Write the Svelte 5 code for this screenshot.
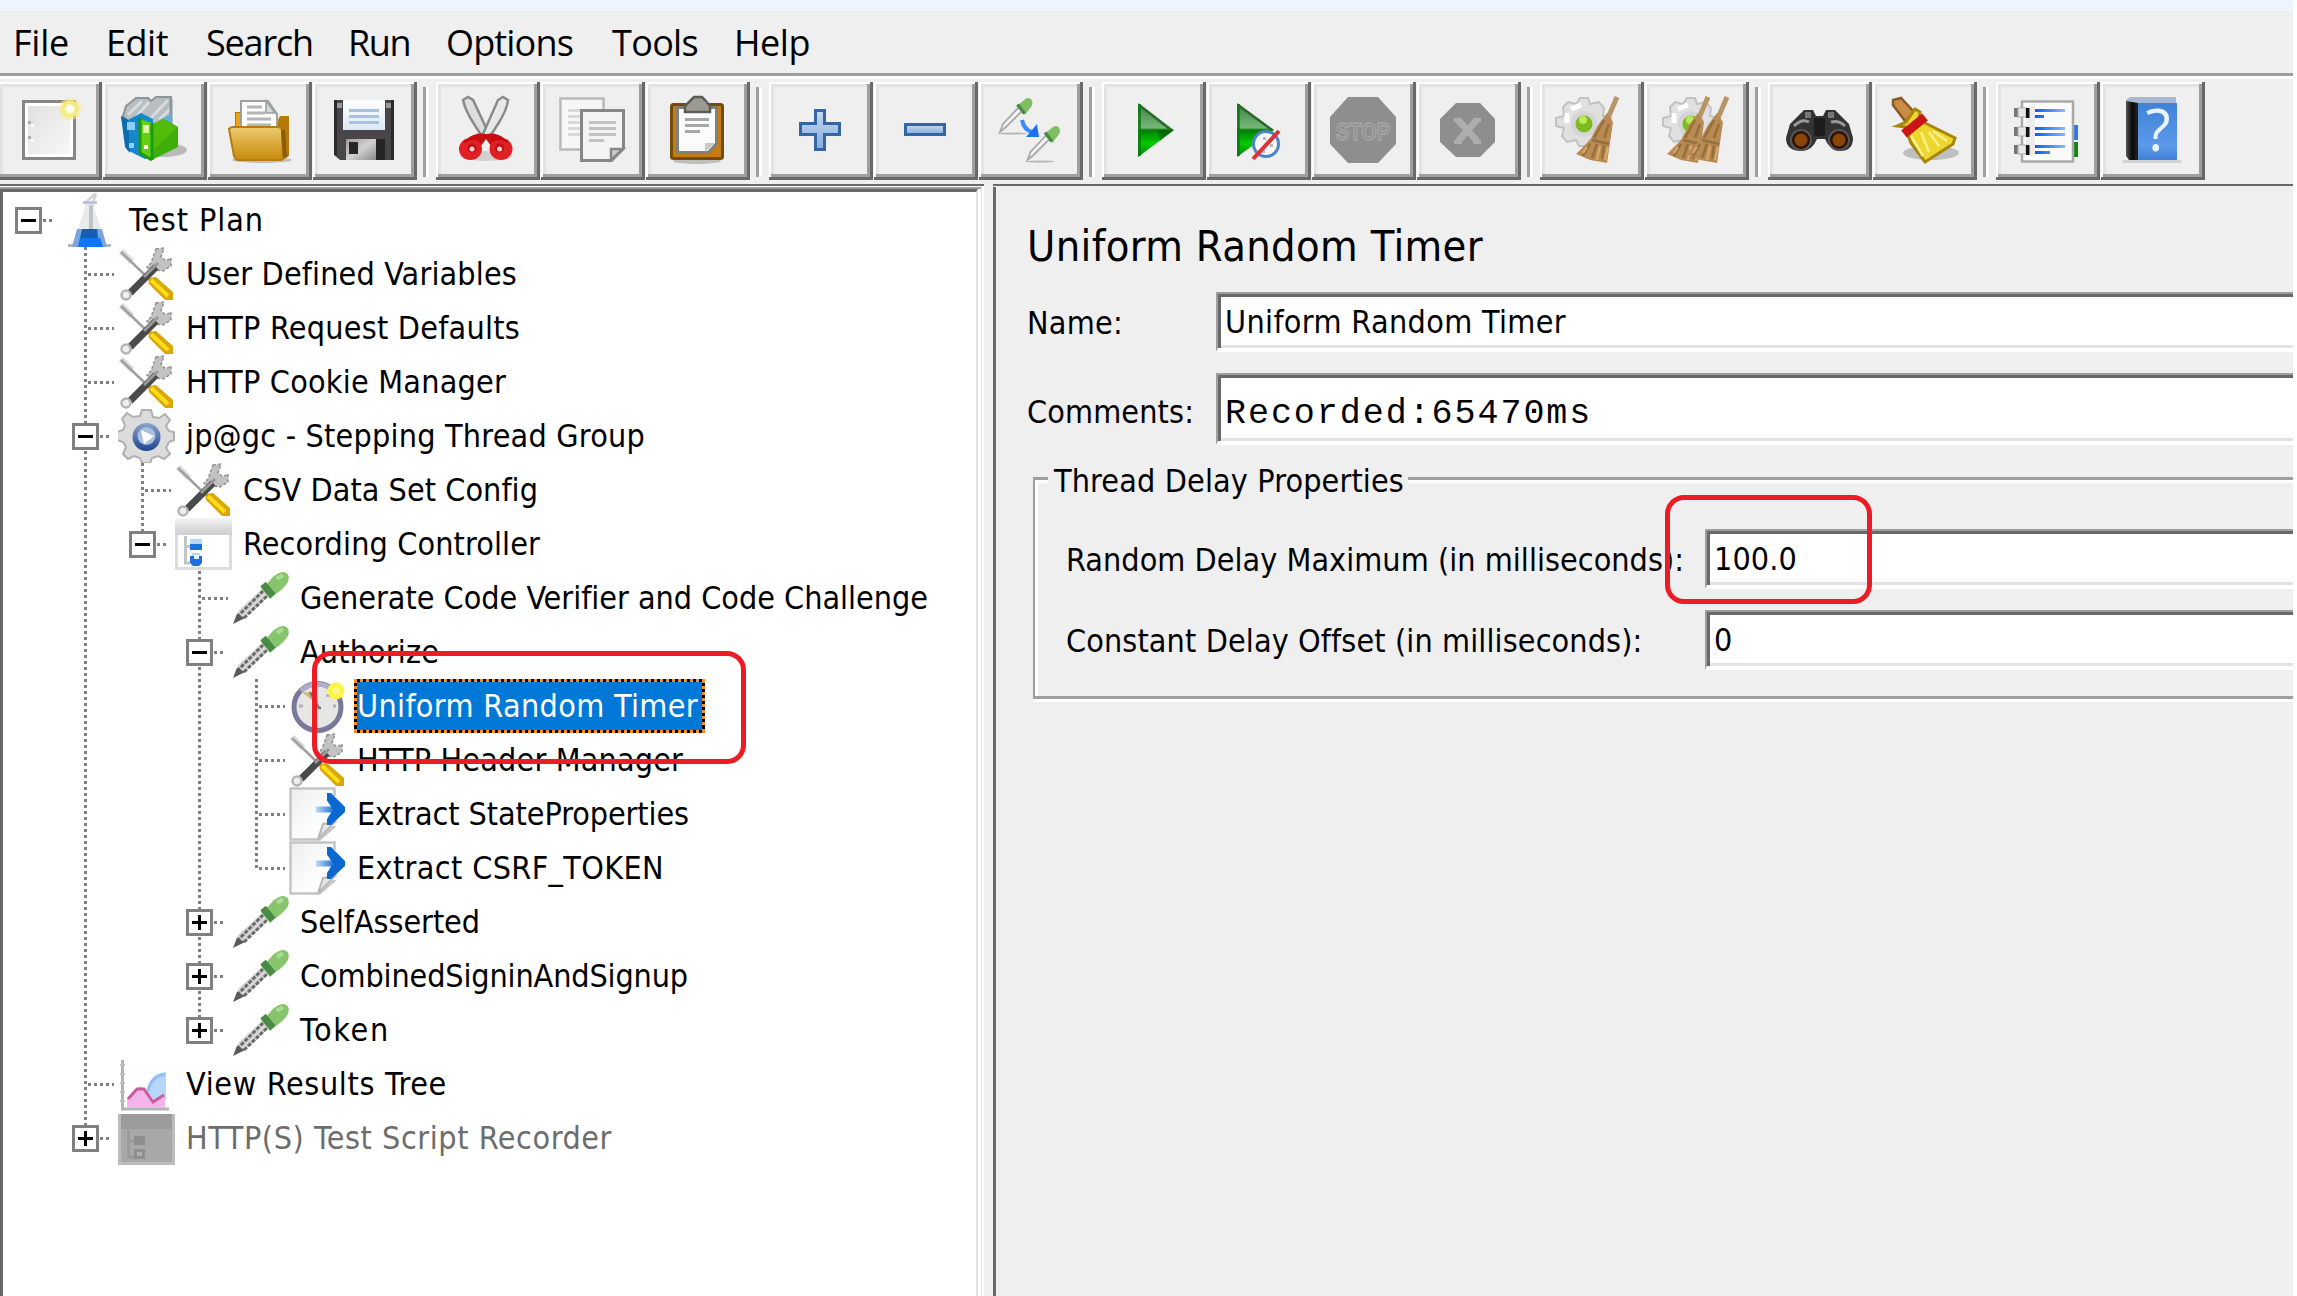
<script>
  const menus = [
    { label: 'File', width: 93 },
    { label: 'Edit', width: 100 },
    { label: 'Search', width: 142 },
    { label: 'Run', width: 98 },
    { label: 'Options', width: 166 },
    { label: 'Tools', width: 122 },
    { label: 'Help', width: 100 },
  ];
  const menuText = [53, 59, 104, 59, 124, 83, 73];

  const toolGroups = [
    ['new', 'templates', 'open', 'save'],
    ['cut', 'copy', 'paste'],
    ['plus', 'minus', 'toggle'],
    ['start', 'startNoTimers', 'stop', 'shutdown'],
    ['clear', 'clearAll'],
    ['search', 'searchReset'],
    ['functions', 'help'],
  ];

  // guides: depths of ancestors whose connector line continues past the row
  const rows = [
    { d: 0, icon: 'flask', text: 'Test Plan', w: 132, box: '-', guides: [], root: true },
    { d: 1, icon: 'tools', text: 'User Defined Variables', w: 328, guides: [] },
    { d: 1, icon: 'tools', text: 'HTTP Request Defaults', w: 331, guides: [] },
    { d: 1, icon: 'tools', text: 'HTTP Cookie Manager', w: 317, guides: [] },
    { d: 1, icon: 'gear', text: 'jp@gc - Stepping Thread Group', w: 456, box: '-', guides: [] },
    { d: 2, icon: 'tools', text: 'CSV Data Set Config', w: 292, guides: [1] },
    { d: 2, icon: 'controller', text: 'Recording Controller', w: 294, box: '-', guides: [1], last: true },
    { d: 3, icon: 'dropper', text: 'Generate Code Verifier and Code Challenge', w: 625, guides: [1] },
    { d: 3, icon: 'dropper', text: 'Authorize', w: 136, box: '-', guides: [1] },
    { d: 4, icon: 'timer', text: 'Uniform Random Timer', w: 338, guides: [1, 3], selected: true },
    { d: 4, icon: 'tools', text: 'HTTP Header Manager', w: 323, guides: [1, 3] },
    { d: 4, icon: 'extract', text: 'Extract StateProperties', w: 329, guides: [1, 3] },
    { d: 4, icon: 'extract', text: 'Extract CSRF_TOKEN', w: 304, guides: [1, 3], last: true },
    { d: 3, icon: 'dropper', text: 'SelfAsserted', w: 177, box: '+', guides: [1] },
    { d: 3, icon: 'dropper', text: 'CombinedSigninAndSignup', w: 385, box: '+', guides: [1] },
    { d: 3, icon: 'dropper', text: 'Token', w: 87, box: '+', guides: [1], last: true },
    { d: 1, icon: 'chart', text: 'View Results Tree', w: 258, guides: [] },
    { d: 1, icon: 'disabled', text: 'HTTP(S) Test Script Recorder', w: 423, box: '+', guides: [], last: true, disabled: true },
  ];

  // Spreads a label's letters so that the text takes the given width
  function fit(node, width) {
    const natural = node.getBoundingClientRect().width;
    const n = node.textContent.length;
    node.style.letterSpacing = `${(width + 3 - natural) / n}px`;
  }
</script>

{#snippet toolIcon(name)}
  <svg class="tool-icon" viewBox="0 0 104 98">
    {#if name === 'new'}
      <rect x="25.5" y="19.5" width="51" height="57" fill="url(#pageG)" stroke="#868684" stroke-width="3" />
      <rect x="28.5" y="22.5" width="45" height="51" fill="none" stroke="#fff" stroke-width="3" />
      <path d="M30 39h3v3h-3zM30 54h3v3h-3z" fill="#aaa" /><path d="M33 42h3v3h-3zM33 57h3v3h-3z" fill="#fff" />
      <circle cx="72" cy="27" r="11" fill="#f7ec8a" opacity=".6" /><circle cx="72" cy="27" r="6.500" fill="#fffef0" stroke="#f6ea80" stroke-width="4" />
    {:else if name === 'templates'}
      <ellipse cx="60" cy="68" rx="24" ry="7" fill="#000" opacity=".22" />
      <path d="M20 34l3-10 10-8h12l3 3 5-4h15v45H44z" fill="#b8bec1" stroke="#8b9498" stroke-width="2" />
      <path d="M25 33l14-14M32 36l14-16M47 37l18-19M56 38l11-11" stroke="#d9dcdd" stroke-width="3" />
      <path d="M68 17v40" stroke="#8b979c" stroke-width="3" />
      <path d="M56 38l12-6v14h-12z" fill="#5fb0e0" />
      <path d="M18 34l7 4 13-7 12 6v38l-8 2-18-9z" fill="#1686cf" /><path d="M18 34l7 4 2 33-5-6z" fill="#0a6cb0" />
      <path d="M24 40h8v8h-8zM26 61h5v5h-5z" fill="#8ed0f5" />
      <path d="M37 37l12 4v37l-12-7z" fill="#62cf12" /><path d="M49 42l12-5 14 8v20L49 78z" fill="#3fae06" />
      <path d="M49 42l12-5 14 8-26 24z" fill="#58c00c" opacity=".7" />
      <path d="M49 41v37M37 36v35l12 7" fill="none" stroke="#1a9a10" stroke-width="3" />
      <path d="M40 43h6v8h-6z" fill="#dff7a0" /><path d="M41 63h4v4h-4z" fill="#fff" />
    {:else if name === 'open'}
      <ellipse cx="54" cy="78" rx="30" ry="3" fill="#000" opacity=".2" />
      <path d="M27 46V30h8v16zM66 46l6-12h9v40l-6 4z" fill="#b5790a" /><path d="M28 46V31h6v15z" fill="#e8a510" />
      <path d="M33 48V19h27l9 13v16z" fill="#fdfdfd" stroke="#9aa0a4" stroke-width="2" /><path d="M58 19v12h9z" fill="#d5dadd" stroke="#9aa0a4" stroke-width="1.5" />
      <path d="M39 25h15M39 31h18M39 37h24M39 43h24" stroke="#b5b5b5" stroke-width="3" />
      <path d="M21 47q1-2 4-2h44q4 0 5 3l1 27q0 3-3 3H31q-4 0-5-4z" fill="url(#foldG)" stroke="#b57d10" stroke-width="2" />
      <path d="M75 48l2 27" stroke="#8a5c08" stroke-width="4" />
    {:else if name === 'save'}
      <path d="M21 18h60v60H27l-6-5z" fill="#484648" /><path d="M21 18h3v55h-3zM78 18h3v60h-3z" fill="#2a2a2a" />
      <path d="M24 21h5v5h-5zM73 21h5v5h-5z" fill="#999" />
      <rect x="30" y="18" width="42" height="30" fill="url(#labelG)" />
      <path d="M36 28.500h30M36 34.500h30M36 40.500h30" stroke="#a9c1dc" stroke-width="3" />
      <rect x="33" y="57" width="30" height="21" fill="url(#shutG)" /><rect x="63" y="57" width="9" height="21" fill="#242424" /><rect x="36" y="60" width="9" height="12" fill="#262626" />
    {:else if name === 'cut'}
      <ellipse cx="50" cy="74" rx="26" ry="5" fill="#000" opacity=".13" />
      <path d="M27 18l5-3 5 3 16 34-6 4-9-14q-9-14-11-24z" fill="#dedede" stroke="#8a8a86" stroke-width="2.500" />
      <path d="M72 18l-5-3-5 3-15 34 6 4 9-14q9-14 10-24z" fill="#e8e8e8" stroke="#8a8a86" stroke-width="2.500" />
      <path d="M32 56q8-6 18-4 10-2 18 4v8H55l-5-7-5 7H32z" fill="#c80f12" />
      <ellipse cx="34.500" cy="67" rx="11.500" ry="11" fill="#e02024" /><ellipse cx="65" cy="67" rx="11.500" ry="11" fill="#e02024" />
      <path d="M28 60q8-6 17-1M72 60q-8-6-17-1" fill="none" stroke="#c40c10" stroke-width="2.500" />
      <circle cx="36" cy="66" r="4.500" fill="#c01014" /><circle cx="63.500" cy="66" r="4.500" fill="#c01014" /><circle cx="36" cy="67" r="2.500" fill="#f3d0d0" /><circle cx="63.500" cy="67" r="2.500" fill="#f3d0d0" />
    {:else if name === 'copy'}
      <rect x="19.500" y="16.500" width="43" height="51" fill="#f6f6f6" stroke="#b9b9b9" stroke-width="2.500" />
      <path d="M27 28.500h13M27 34.500h13M27 40.500h13M27 46.500h13M27 52.500h13" stroke="#d4d4d4" stroke-width="2.500" />
      <path d="M40.500 28.500h42v38l-12 12h-30z" fill="#f3f3f3" stroke="#868684" stroke-width="3" />
      <path d="M70 78V67h12z" fill="#ccc" stroke="#868684" stroke-width="2.500" />
      <path d="M48 40.500h27M48 46.500h27M48 52.500h27M48 58.500h15" stroke="#c2c2c2" stroke-width="3" />
    {:else if name === 'paste'}
      <ellipse cx="51" cy="79" rx="24" ry="3" fill="#000" opacity=".2" />
      <rect x="25.500" y="22.500" width="51" height="54" rx="2" fill="#c17d11" stroke="#724c0a" stroke-width="3" />
      <path d="M31.500 25.500h39v36l-8 9h-31z" fill="#fbfbfb" stroke="#7f7f7c" stroke-width="3" />
      <path d="M59 70V61h10z" fill="#c8c8c5" />
      <path d="M39 37.500h24M39 43.500h24M39 49.500h15" stroke="#a7a7a7" stroke-width="3" />
      <path d="M45 18l3-3h8l3 3 5 6v6H39v-6z" fill="#9b9b92" stroke="#5c5c58" stroke-width="2.500" />
    {:else if name === 'plus'}
      <path d="M46.500 28.500h9v13h15v11h-15v15h-9v-15h-15v-11h15z" fill="url(#blueG)" stroke="#3465a4" stroke-width="3" />
    {:else if name === 'minus'}
      <rect x="31.500" y="42.500" width="39" height="10" fill="url(#blueG)" stroke="#3465a4" stroke-width="3" />
    {:else if name === 'toggle'}
      {#each [[0, 0], [27.500, 28]] as [dx, dy]}
        <g transform="translate({dx} {dy})">
          <ellipse cx="34" cy="51.500" rx="14" ry="1" fill="#b5b5b5" />
          <path d="M21 50l3-8L40 25l4 3-17 17z" fill="#f5f5f5" stroke="#a8a8a8" stroke-width="1.800" />
          <path d="M39 23l5-4q4-5 8-2 3 4 0 8l-4 5-2 3z" fill="#7fbf62" /><path d="M38.500 22.500l7 9" stroke="#4a8a46" stroke-width="3.500" />
        </g>
      {/each}
      <path d="M43 38q2 10 10 12" fill="none" stroke="#3b8bff" stroke-width="4" /><path d="M58 42l2 13-13 0z" fill="#1a72f0" />
    {:else if name === 'start'}
      <path d="M36 21l36 27-36 27z" fill="url(#playG)" /><path d="M37 23l32 25" stroke="#2c6a2c" stroke-width="2.500" /><path d="M37.500 22v52" stroke="#0b7a12" stroke-width="2.500" /><path d="M56 48h16L58 59z" fill="#004b00" opacity=".45" />
    {:else if name === 'startNoTimers'}
      <path d="M30 21l37 27-37 27z" fill="url(#playG)" /><path d="M31 23l34 25" stroke="#2c6a2c" stroke-width="2.500" /><path d="M31.500 22v52" stroke="#0b7a12" stroke-width="2.500" />
      <circle cx="59" cy="62" r="12.500" fill="#f4f6f8" stroke="#4d86c6" stroke-width="3" />
      <path d="M56 55h3v3h-3zM63 62h3v3h-3zM55 68h3v3h-3z" fill="#bbb" /><path d="M46 77l26-28" stroke="#dd3338" stroke-width="4" />
    {:else if name === 'stop'}
      <path d="M36 15h30l18 20v27L66 81H36L18 62V35z" fill="#8e8e8e" />
      <text class="stop" x="51" y="58" text-anchor="middle" textLength="54" lengthAdjust="spacingAndGlyphs">STOP</text>
    {:else if name === 'shutdown'}
      <path d="M39 21h24l15 16v23L63 75H39L23 60V37z" fill="#8e8e8e" />
      <path d="M41 38l19 21M60 38L41 59" stroke="#adadad" stroke-width="7" /><path d="M37 38h8M56 38h8M37 60h8M56 60h8" stroke="#adadad" stroke-width="4" />
    {:else if name === 'clear' || name === 'clearAll'}
      <g transform={name === 'clearAll' ? 'translate(2 0)' : ''}>
        <path d="M40 16h8l2 6 9-2 5 6-1 8 8 2v9l-8 2v8l-7 5-6-2-4 6h-7l-3-6-9 2-5-6 2-8-8-2v-8l8-2-1-9 5-5 8 2z" fill="#e0e0e0" stroke="#c2c2c2" stroke-width="2" />
        <path d="M31 27l10-4M27 31v10" stroke="#fff" stroke-width="5" /><circle cx="44" cy="42" r="13" fill="#d5d5d5" /><circle cx="44" cy="42" r="8.500" fill="#7dbb21" /><circle cx="43" cy="38" r="4" fill="#b9ea57" />
      </g>
      {#each name === 'clearAll' ? [-14, 5] : [0] as dx}
        <g transform="translate({dx} 0)">
          <path d="M77 15L68 36" stroke="#b99565" stroke-width="5" />
          <path d="M67 31l6 9-2 14-4 27-17-3-14-6 14-14 8-15z" fill="#b98a52" />
          <path d="M64 38l-10 18M69 42l-5 14M52 58l17 4M50 62l-7 12M57 62l-5 14M64 63l-2 14" stroke="#94703f" stroke-width="2.500" /><path d="M47 65l-4 6M60 64l-3 14M68 65l-3 13" stroke="#dcab6a" stroke-width="2" />
        </g>
      {/each}
    {:else if name === 'search'}
      <path d="M18 56l4-14 14-14h9l3 6h7l3-6h9l14 14 4 14q0 13-13 13-10 0-15-12h-8q-5 12-15 12-16 0-16-13z" fill="#333" />
      <path d="M37 30h6v6h-6zM60 30h6v6h-6z" fill="#777" /><path d="M26 44q8-8 15-4M63 40q8-2 14 4" fill="none" stroke="#999" stroke-width="3" /><path d="M46 36h11v18H46z" fill="#1d1d1d" />
      <circle cx="33" cy="58" r="11" fill="#555" /><circle cx="71" cy="58" r="11" fill="#555" /><circle cx="33" cy="58" r="9" fill="#2b1405" /><circle cx="71" cy="58" r="9" fill="#2b1405" /><circle cx="33" cy="58" r="6.500" fill="#8c4508" /><circle cx="71" cy="58" r="6.500" fill="#8c4508" />
    {:else if name === 'searchReset'}
      <ellipse cx="58" cy="71" rx="28" ry="7" fill="#000" opacity=".2" />
      <path d="M20 18l8-2 14 15-10 8-12-16z" fill="#c98d45" stroke="#8c5a20" stroke-width="2.500" />
      <path d="M24 44l9-4 9-13 5 3-1 8 36 18-2 6-28 18-14-19-6-16z" fill="#ecd72f" stroke="#a8860a" stroke-width="3" />
      <path d="M38 54l12 20M48 50l8 20M56 50l10 14M60 49l14 10" stroke="#f9f08a" stroke-width="2.500" />
      <path d="M31 52l21-17" stroke="#cc1515" stroke-width="9" />
    {:else if name === 'functions'}
      <path d="M75 43h7v15h-7z" fill="#2f78ef" /><path d="M75 60h7v15h-7z" fill="#0b8a0b" />
      <rect x="26" y="19.500" width="51" height="60" fill="#fbfbfa" stroke="#a9a9a9" stroke-width="2.500" /><rect x="30" y="24" width="9" height="50" fill="#ececec" />
      {#each [26, 45, 63] as y}
        <rect x="18" {y} width="4" height="9" fill="#777" /><rect x="22" {y} width="8" height="9" fill="#e8e8e8" stroke="#aaa" /><rect x="30" {y} width="3.500" height="10" fill="#111" />
      {/each}
      <path d="M39 27h30v3H39zM39 33h9v3h-9zM39 45h30v3H39zM39 51h30v3H39zM39 63h30v3H39zM39 69h15v3H39z" fill="url(#lineG)" />
    {:else if name === 'help'}
      <path d="M22 78h58v3H22z" fill="#000" opacity=".12" /><path d="M25 18l4-3h46v6H25z" fill="#a9b8cf" />
      <rect x="37" y="21" width="39" height="57" fill="url(#bookG)" /><path d="M25 19l12 2v57H28l-3-4z" fill="url(#spineG)" />
      <text class="q" x="57" y="69" text-anchor="middle">?</text>
    {/if}
  </svg>
{/snippet}

{#snippet treeIcon(name)}
  <svg class="tree-icon" viewBox="0 0 57 54">
    {#if name === 'flask'}
      <path d="M24 10l11-10M35 1l-5 14" stroke="#d4d4d4" stroke-width="2.500" />
      <path d="M23 9h12L33 14l7 22 6 18H10l7-18 7-22z" fill="#e8ebed" /><path d="M22 9.500h14" stroke="#b9b9e0" stroke-width="2.500" />
      <path d="M30 12v24" stroke="#bcc4c8" stroke-width="4" />
      <path d="M16 36h25l5 18H11z" fill="#7ba4e0" /><path d="M21 36h15l1 9H19z" fill="#1060b8" /><path d="M19 45h20l3 9H17z" fill="#0a78f5" /><path d="M7 52.500h5M45 52.500h5" stroke="#aaa" stroke-width="2.500" />
    {:else if name === 'tools'}
      <path d="M3 4l11 11" stroke="#dadada" stroke-width="6" /><path d="M3 5l25 24" stroke="#a0a0a0" stroke-width="2.500" />
      <path d="M30 31l8-1 17 15v8h-8L31 37z" fill="#d9a806" /><path d="M33 33l17 16" stroke="#ffdc1c" stroke-width="4" />
      <path d="M38 2l8-1-3 9 5 4 5-3v8l-8 5-7-1-3 3-6-6 4-4z" fill="#c2c2c2" stroke="#8f8f8f" stroke-width="1.500" stroke-dasharray="3 2" />
      <path d="M38 20L12 46" stroke="#4a4a4a" stroke-width="7" /><path d="M40 16L26 30" stroke="#999" stroke-width="3" />
      <circle cx="8" cy="48" r="4.500" fill="#eee" stroke="#b5b5b5" stroke-width="2.500" />
    {:else if name === 'gear'}
      <path d="M24 1h9l2 7 6 1 6-4 5 6-4 6 3 5 5 1v8l-5 2-3 6 4 6-6 5-6-3-6 2-2 5h-8l-2-5-6-2-6 3-5-5 3-7-3-5-6-2v-8l6-2 2-5-3-6 5-6 6 4 7-1z" fill="#dcdcdc" stroke="#b0b0b0" stroke-width="2" />
      <circle cx="28.500" cy="28" r="14" fill="url(#ringG)" /><circle cx="28.500" cy="27" r="9" fill="#a9bfe2" /><path d="M23 21l13 6-10 8z" fill="#fff" />
    {:else if name === 'controller'}
      <rect x="1.500" y="4.500" width="54" height="47" fill="#fff" stroke="#dcdcdf" stroke-width="3" /><rect y="1" width="57" height="17" fill="url(#headG)" />
      <path d="M10.500 19v27H15M10 29.500h5" fill="none" stroke="#c4c4c4" stroke-width="3" /><path d="M15 22h12v6H15zM17 36h8v5h-8z" fill="#b9d6f6" /><path d="M15 27h12v6H15zM15 39h12v7l-3 3h-6l-3-3z" fill="#1d6fdc" /><path d="M19 38h5v4h-5z" fill="#e8f2fd" />
    {:else if name === 'disabled'}
      <rect y="3" width="57" height="51" fill="#a8a8a8" /><rect y="3" width="57" height="15" fill="#9c9c9c" /><path d="M1.500 3v49.500h54V3" fill="none" stroke="#bcbcbc" stroke-width="3" />
      <path d="M10.500 19v27H16M10 30h6" fill="none" stroke="#999" stroke-width="2.500" /><path d="M16 25h11v9H16zM16 38h11v10H16z" fill="#8e8e8e" /><path d="M19 41h5v4h-5z" fill="#b0b0b0" />
    {:else if name === 'dropper'}
      <path d="M2 50l4-10L30 18l7 7-24 21z" fill="#d6d6d6" /><path d="M5 46L31 20M12 47l23-22" stroke="#6a6a6a" stroke-width="3" stroke-dasharray="4 1.500" /><path d="M1 53l4-10 8 4z" fill="#5a5a5a" />
      <path d="M29 17l6-4Q43 2 50 1q9 0 6 10-5 8-14 13l-4 4z" fill="#86c56c" /><path d="M31 13l10 12" stroke="#4a8a48" stroke-width="7" /><path d="M45 8l6-4" stroke="#aadc94" stroke-width="4" />
    {:else if name === 'timer'}
      <circle cx="28.500" cy="28" r="23.500" fill="#e6e6e4" stroke="#79789a" stroke-width="5" /><path d="M12 12A23.500 23.500 0 0 1 44 11" fill="none" stroke="#aeaec6" stroke-width="5" />
      <path d="M13 13l15 1 1 12z" fill="#cdbb7c" /><path d="M21 13l9 16h2" fill="none" stroke="#777" stroke-width="2.500" /><path d="M10 27h4M44 27h3M27 36v3M27 45v3M39 15v3" stroke="#b0b0b0" stroke-width="3" />
      <circle cx="47" cy="12" r="6" fill="#fff98a" stroke="#fdf544" stroke-width="5" />
    {:else if name === 'extract'}
      <path d="M1.500 1.500h44v38l-15 13h-29z" fill="url(#exG)" stroke="#c4c4c4" stroke-width="2.500" /><path d="M40 9h8v30h-8z" fill="#fff" /><path d="M29 52l5-15 12-2z" fill="#e8e8e8" stroke="#b8b8b8" stroke-width="2" />
      <path d="M27 22.500h20" stroke="url(#arrG)" stroke-width="6" /><path d="M38 6h4l14 14v5L42 38h-4V32l6-9.500-6-9z" fill="#0a68d0" />
    {:else if name === 'chart'}
      <path d="M4.500 3v49H51" fill="none" stroke="#b4b4b4" stroke-width="3" /><path d="M2 8h5M2 17h5M2 26h5M2 35h5M2 44h5" stroke="#c0c0c0" stroke-width="2" />
      <path d="M30 36q2-14 8-18l10-3v28H36z" fill="#b8d6fb" /><path d="M30 34q3-15 17-17" fill="none" stroke="#8dbcf6" stroke-width="3" />
      <path d="M9 51V42q8-10 14-13l13 15 11-6v13z" fill="#f4b4ec" /><path d="M10 42l9-10h7l9 13 11-7" fill="none" stroke="#c85c9c" stroke-width="3" />
    {/if}
  </svg>
{/snippet}

{#snippet joint(row, level)}
  <svg class="joint" viewBox="0 0 57 54">
    {#if row.guides.includes(level)}
      <path class="dots" d="M28.500 0V54" />
    {:else if level === row.d}
      {#if !row.root}<path class="dots" d={row.last ? 'M28.500 0V27' : 'M28.500 0V54'} />{/if}
      <path class="dots" d={row.box ? 'M43 27.500H55' : 'M31 27.500H57'} />
      {#if row.box}
        <rect x="16.500" y="15.500" width="24" height="24" fill="#fff" stroke="#808080" stroke-width="3" />
        <path d={row.box === '+' ? 'M21 27.500h15M28.500 20v15' : 'M21 27.500h15'} stroke="#000" stroke-width="3" />
      {/if}
    {/if}
  </svg>
{/snippet}

<svg class="defs" width="0" height="0">
  <defs>
    <linearGradient id="pageG" x1="0" y1="0" x2="1" y2="1"><stop stop-color="#dedede" /><stop offset="1" stop-color="#fafafa" /></linearGradient>
    <linearGradient id="foldG" x1="0" y1="0" x2="0" y2="1"><stop stop-color="#edcb72" /><stop offset="1" stop-color="#c98a08" /></linearGradient>
    <linearGradient id="labelG" x1="0" y1="0" x2="0" y2="1"><stop stop-color="#fff" /><stop offset="1" stop-color="#dce8f5" /></linearGradient>
    <linearGradient id="shutG" x1="0" y1="0" x2="1" y2="1"><stop stop-color="#989898" /><stop offset=".5" stop-color="#d2d2d2" /><stop offset="1" stop-color="#888" /></linearGradient>
    <linearGradient id="blueG" x1="0" y1="0" x2="0" y2="1"><stop stop-color="#c6d9f0" /><stop offset="1" stop-color="#86abdb" /></linearGradient>
    <linearGradient id="playG" x1="0" y1="0" x2="0" y2="1"><stop stop-color="#3f7f42" /><stop offset=".46" stop-color="#76b878" /><stop offset=".5" stop-color="#067a06" /><stop offset=".75" stop-color="#00cc00" /><stop offset="1" stop-color="#0a7a10" /></linearGradient>
    <linearGradient id="lineG"><stop stop-color="#0a5df0" /><stop offset="1" stop-color="#8ab8ff" /></linearGradient>
    <linearGradient id="bookG" x1="0" y1="0" x2="0" y2="1"><stop stop-color="#3f82d6" /><stop offset=".75" stop-color="#5c9aea" /><stop offset="1" stop-color="#3f7fd4" /></linearGradient>
    <linearGradient id="spineG"><stop stop-color="#555" /><stop offset=".5" stop-color="#0a0a0a" /><stop offset="1" stop-color="#222" /></linearGradient>
    <linearGradient id="ringG" x1="0" y1="0" x2="0" y2="1"><stop stop-color="#8fa4c8" /><stop offset="1" stop-color="#1c4690" /></linearGradient>
    <linearGradient id="headG" x1="0" y1="0" x2="0" y2="1"><stop stop-color="#f5f5f5" /><stop offset=".6" stop-color="#dadadc" /><stop offset="1" stop-color="#cfcfd2" /></linearGradient>
    <linearGradient id="exG" x1="0" y1="0" x2="1" y2="1"><stop stop-color="#eceeee" /><stop offset=".7" stop-color="#fff" /></linearGradient>
    <linearGradient id="arrG" gradientUnits="userSpaceOnUse" x1="27" y1="0" x2="47" y2="0"><stop stop-color="#bcd9f6" /><stop offset="1" stop-color="#0a68d0" /></linearGradient>
  </defs>
</svg>

<div class="window">
  <div class="title-strip"></div>
  <nav class="menubar">
    {#each menus as menu, i}
      <div class="menu" style:width="{menu.width}px"><span use:fit={menuText[i]}>{menu.label}</span></div>
    {/each}
  </nav>
  <div class="toolbar">
    {#each toolGroups as group}
      <div class="group">
        {#each group as name}
          <button class="tool" aria-label={name}>{@render toolIcon(name)}</button>
        {/each}
      </div>
    {/each}
  </div>

  <div class="panes">
    <div class="tree-pane">
      <div class="tree">
        {#each rows as row}
          <div class="row">
            {#each Array(row.d + 1) as _, level}{@render joint(row, level)}{/each}
            {@render treeIcon(row.icon)}
            <div class="label" class:selected={row.selected} class:off={row.disabled}><span use:fit={row.w}>{row.text}</span></div>
          </div>
        {/each}
      </div>
    </div>
    <div class="edit-pane">
      <h1><span use:fit={453}>Uniform Random Timer</span></h1>
      <div class="line"><label for="nm"><span use:fit={93}>Name:</span></label><div class="field" id="nm"><span use:fit={338}>Uniform Random Timer</span></div></div>
      <div class="line tall"><label for="cm"><span use:fit={164}>Comments:</span></label><div class="field mono" id="cm">Recorded:65470ms</div></div>
      <section class="props">
        <h2><span use:fit={347}>Thread Delay Properties</span></h2>
        <div class="line"><label for="rd"><span use:fit={615}>Random Delay Maximum (in milliseconds):</span></label><div class="field" id="rd"><span use:fit={80}>100.0</span></div></div>
        <div class="line"><label for="cd"><span use:fit={573}>Constant Delay Offset (in milliseconds):</span></label><div class="field" id="cd">0</div></div>
      </section>
    </div>
  </div>
  <div class="mark timer-mark"></div>
  <div class="mark value-mark"></div>
</div>

<style>
  :global(body) { margin: 0; overflow: hidden; }
  .defs { position: absolute; }
  .window {
    position: relative; box-sizing: border-box; width: 2297px; height: 1296px; overflow: hidden;
    display: flex; flex-direction: column; background: #efefef; border-right: 4px solid #fff;
    font: 32px/54px "DejaVu Sans Condensed", "DejaVu Sans", sans-serif; font-stretch: condensed; color: #000;
  }
  .title-strip { height: 11px; background: #eff3fb; flex: none; }
  .menubar {
    display: flex; flex: none; box-sizing: border-box; height: 68px; padding-left: 13px;
    border-bottom: 3px solid #fff; box-shadow: inset 0 -3px #9f9f9f;
    font: 36px/63px "Open Sans", sans-serif; white-space: nowrap;
  }
  .toolbar { display: flex; flex: none; gap: 19px; height: 98px; padding: 3px 0 4px; margin-left: -2px; }
  .group { display: flex; gap: 1px; position: relative; }
  .group:not(:last-child)::after { content: ""; position: absolute; left: calc(100% + 6px); top: 5px; width: 3px; height: 90px; background: #9f9f9f; box-shadow: 3px 0 #fff; }
  .tool {
    box-sizing: border-box; width: 104px; height: 98px; padding: 0; border: 0; background: #efefef; display: block;
    box-shadow: inset -3px -3px #696969, inset 2px 2px #fff, inset -6px -6px #9f9f9f, inset 5px 5px #e3e3e3;
  }
  .tool-icon { display: block; width: 104px; height: 98px; }
  .stop { font: bold 24px "Liberation Sans", sans-serif; fill: #8e8e8e; stroke: #a6a6a6; stroke-width: 1.5px; }
  .q { font: 58px "Open Sans", sans-serif; fill: #eaf2fd; }

  .panes { display: flex; flex: 1; min-height: 0; gap: 9px; }
  .tree-pane {
    box-sizing: border-box; width: 984px; background: #fff; border-top: 2px solid #696969; flex: none;
    display: flex; padding-right: 2px; box-shadow: inset -2px 0 #fff, inset -3px 0 #e3e3e3, inset 0 1px #fff, inset 0 3px #9f9f9f;
  }
  .tree { flex: 1; margin: 3px 4px 0 0; border: solid #696969; border-width: 3px 0 0 3px; border-right: 2px solid #e3e3e3; padding-top: 1px; }
  .row { display: flex; height: 54px; margin-left: -3px; }
  .joint { width: 57px; height: 54px; flex: none; }
  .dots { fill: none; stroke: #808080; stroke-width: 3; stroke-dasharray: 3 3; }
  .tree-icon { width: 57px; height: 54px; margin: 0 8px 0 4px; flex: none; }
  .label { box-sizing: border-box; height: 54px; padding: 0 7px 0 3px; white-space: nowrap; line-height: 55px; }
  .selected { color: #fff; background: #0078d7; outline: 3px dotted #ff8a27; outline-offset: -3px; box-shadow: inset 0 0 0 3px #000; }
  .off { color: #6d6d6d; }

  .edit-pane { flex: 1; border-top: 2px solid #696969; display: flex; flex-direction: column; white-space: nowrap; position: relative; padding-left: 34px; box-shadow: inset 0 1px #efefef, inset 3px 0 #696969; }
  h1 { margin: 30px 0 16px; font-size: 43px; font-weight: 400; line-height: 60px; height: 60px; }
  .line { display: flex; height: 60px; margin-bottom: 21px; }
  .line label { width: 189px; line-height: 62px; flex: none; }
  .field {
    flex: 1; box-sizing: border-box; height: 60px; padding: 0 0 0 7px; background: #fff; line-height: 57px;
    border-left: 2px solid #9f9f9f; border-top: 2px solid #9f9f9f; border-bottom: 4px solid #fff;
    box-shadow: inset 3px 3px #696969, inset 0 -3px #e3e3e3;
  }
  .tall, .tall .field { height: 72px; }
  .tall label { line-height: 79px; }
  .mono { font: 35px/79px "Liberation Mono", monospace; letter-spacing: 1.95px; }
  .props { position: relative; box-sizing: border-box; height: 222px; margin: 11px 0 0 6px; padding: 49px 0 0 31px; border: solid #9f9f9f; border-width: 3px 0 3px 2px; box-shadow: inset 3px 3px #fff, 0 3px #fff; }
  .props .line label { width: 639px; }
  h2 { position: absolute; left: 13px; top: -22px; margin: 0; padding: 0 4px 0 6px; height: 40px; line-height: 46px; font-size: 32px; font-weight: 400; background: #efefef; }

  .mark { position: absolute; box-sizing: border-box; border: 5px solid #ed1c24; border-radius: 19px; }
  .timer-mark { left: 312px; top: 651px; width: 434px; height: 113px; }
  .value-mark { left: 1665px; top: 495px; width: 207px; height: 109px; }
</style>
